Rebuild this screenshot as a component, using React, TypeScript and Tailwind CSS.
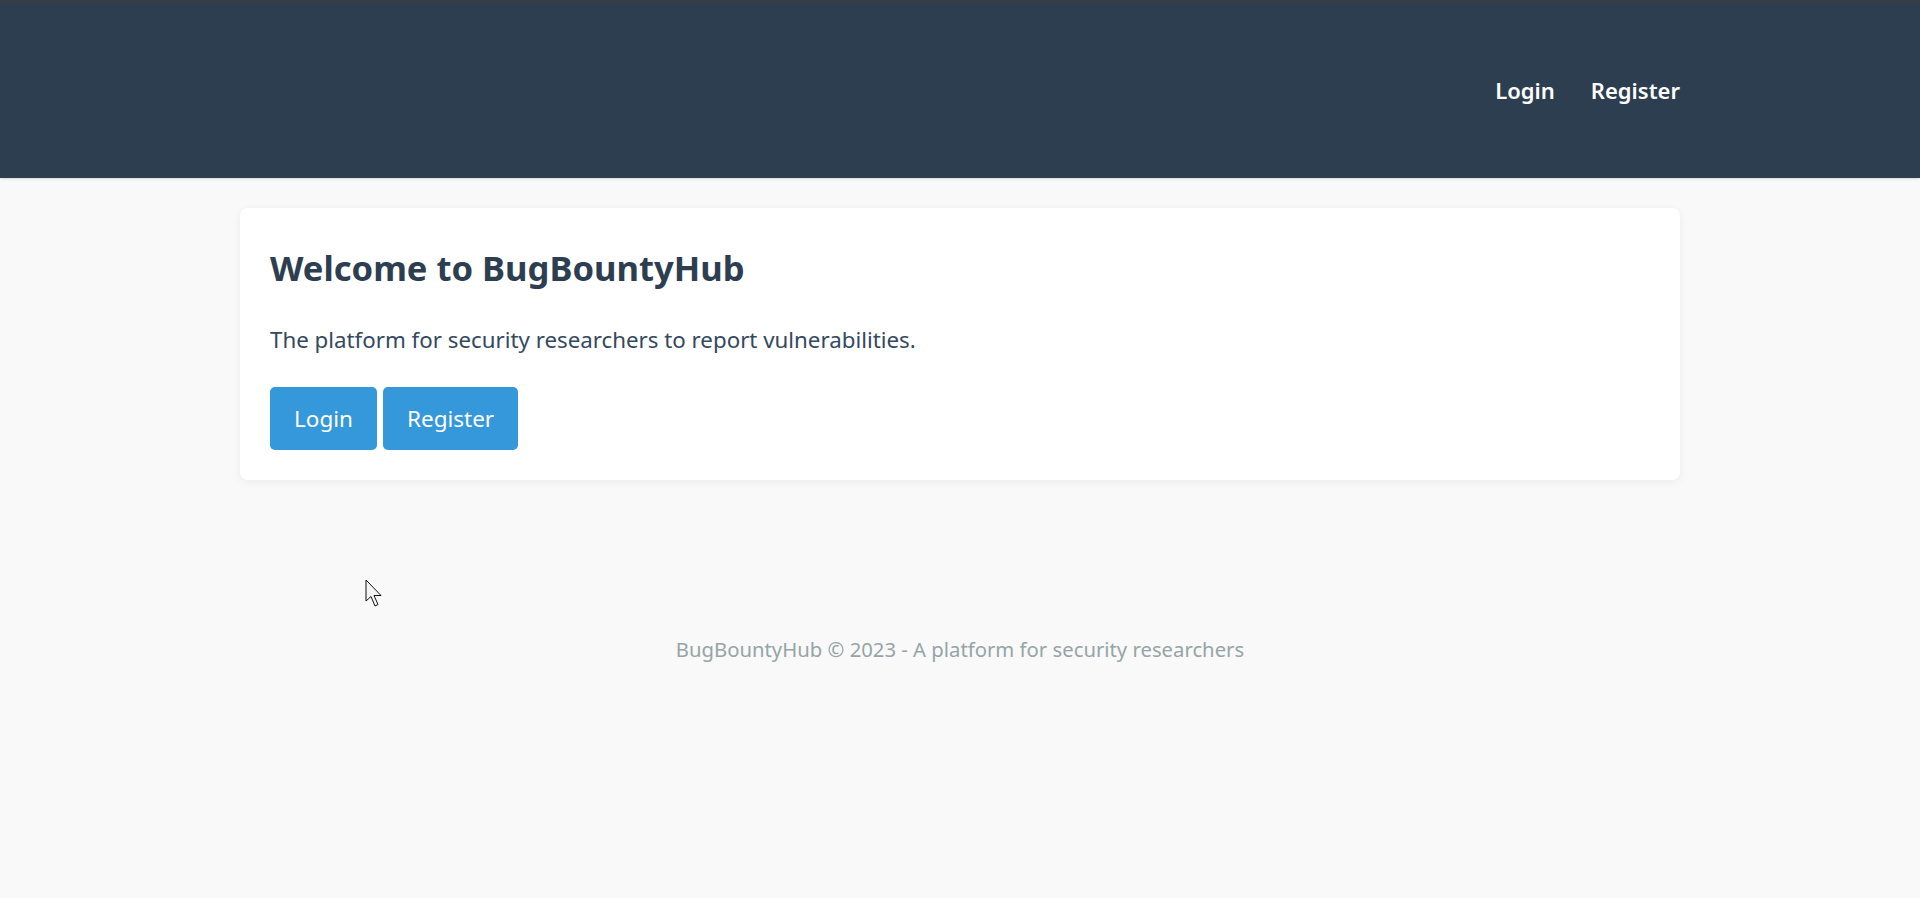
export default function App() {
  return (
    <div
      className="relative min-h-[898px] bg-[#f9f9f9] text-[#2c3e50]"
      style={{ fontFamily: '"Noto Sans", "Open Sans", sans-serif' }}
    >
      {/* Header */}
      <header className="h-[178px] bg-[#2c3e50] border-t-2 border-[#3a3d40] shadow-sm">
        <div className="mx-auto flex h-full w-[1440px] items-center justify-end">
          <nav className="flex items-center gap-[36px] text-[22px] font-semibold text-white">
            <a href="#">Login</a>
            <a href="#">Register</a>
          </nav>
        </div>
      </header>

      {/* Main */}
      <main className="mx-auto w-[1440px] pt-[30px]">
        <div className="rounded-lg bg-white p-[30px] shadow-[0_2px_10px_rgba(0,0,0,0.06)]">
          <h2 className="mt-[9px] mb-[34px] text-[34.6px] font-bold leading-[1.2]">
            Welcome to BugBountyHub
          </h2>
          <p className="mb-[31px] text-[22.3px] leading-[1.5] text-[#34495e]">
            The platform for security researchers to report vulnerabilities.
          </p>
          <div className="flex gap-[6px]">
            <button className="h-[63px] rounded-[5px] bg-[#3498db] px-[24px] text-[22.5px] text-white">
              Login
            </button>
            <button className="h-[63px] rounded-[5px] bg-[#3498db] px-[24px] text-[22.5px] text-white">
              Register
            </button>
          </div>
        </div>
      </main>

      {/* Footer */}
      <footer className="mt-[154px] text-center text-[20.3px] leading-[30px] text-[#95a5a6]">
        BugBountyHub © 2023 - A platform for security researchers
      </footer>

      {/* mouse pointer */}
      <svg
        className="absolute left-[365px] top-[579px]"
        width="18"
        height="30"
        viewBox="0 0 18 30"
      >
        <path
          d="M1 1 L1 22 L6 17.5 L10 27 L13 25.5 L9 16.5 L16 16.5 Z"
          fill="#f5f5f5"
          stroke="#111"
          strokeWidth="1"
        />
      </svg>
    </div>
  );
}
